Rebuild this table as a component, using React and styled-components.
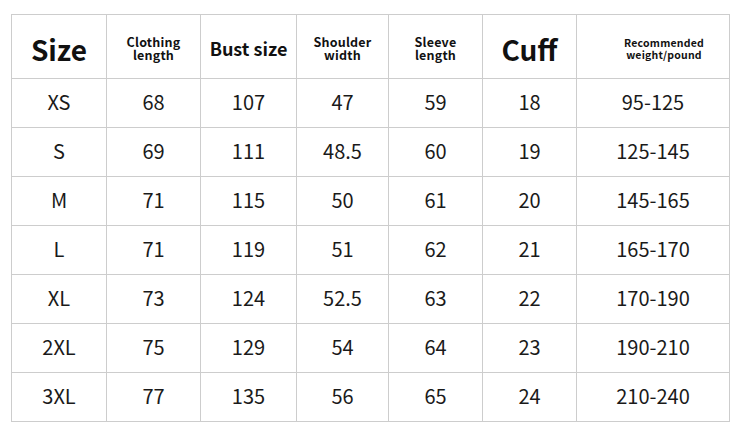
import React from "react";
import styled, { createGlobalStyle } from "styled-components";

const GlobalStyle = createGlobalStyle`
    html, body {
        margin: 0;
        padding: 0;
        background-color: #ffffff;
    }
    body {
        font-family: "Noto Sans CJK SC", "Noto Sans", sans-serif;
        color: #1a1a1a;
    }
`;

const Page = styled.div`
    width: 740px;
    height: 437px;
    padding: 14px 0 0 11px;
    box-sizing: border-box;
`;

const SizeGrid = styled.div`
    display: grid;
    grid-template-columns: 94px 93px 95px 91px 93px 93px 152px;
    grid-template-rows: 63px repeat(7, 48px);
    gap: 1px;
    padding: 1px;
    width: max-content;
    background-color: #cdcdcd;
`;

const Cell = styled.div`
    display: flex;
    align-items: center;
    justify-content: center;
    text-align: center;
    box-sizing: border-box;
    background-color: #ffffff;
`;

const HeadCell = styled(Cell)`
    flex-direction: column;
    padding-top: ${(props) => (props.$big ? "5px" : "4px")};
    padding-left: ${(props) => props.$shift || 0}px;
    font-weight: 700;
    color: #111111;
    font-size: ${(props) => props.$size}px;
    line-height: ${(props) => props.$lh || 1.1};
    letter-spacing: ${(props) => (props.$size < 14 ? "0.2px" : "0")};
`;

const HeadLine = styled.span`
    display: block;
`;

const BodyCell = styled(Cell)`
    padding-bottom: 3px;
    font-size: 20px;
    font-weight: 400;
    color: #1a1a1a;
`;

const headers = [
    { text: ["Size"], size: 28, big: true },
    { text: ["Clothing", "length"], size: 12.5, lh: 1 },
    { text: ["Bust size"], size: 18, big: true },
    { text: ["Shoulder", "width"], size: 12.5, lh: 1 },
    { text: ["Sleeve", "length"], size: 12.5, lh: 1 },
    { text: ["Cuff"], size: 28, big: true },
    { text: ["Recommended", "weight/pound"], size: 10.5, lh: 1.1, shift: 22 },
];

const rows = [
    ["XS", "68", "107", "47", "59", "18", "95-125"],
    ["S", "69", "111", "48.5", "60", "19", "125-145"],
    ["M", "71", "115", "50", "61", "20", "145-165"],
    ["L", "71", "119", "51", "62", "21", "165-170"],
    ["XL", "73", "124", "52.5", "63", "22", "170-190"],
    ["2XL", "75", "129", "54", "64", "23", "190-210"],
    ["3XL", "77", "135", "56", "65", "24", "210-240"],
];

export default function App() {
    return (
        <Page>
            <GlobalStyle />
            <SizeGrid>
                {headers.map((h, i) => (
                    <HeadCell
                        key={"h" + i}
                        $size={h.size}
                        $lh={h.lh}
                        $big={h.big}
                        $shift={h.shift}
                    >
                        {h.text.map((line) => (
                            <HeadLine key={line}>{line}</HeadLine>
                        ))}
                    </HeadCell>
                ))}
                {rows.map((row, r) =>
                    row.map((value, c) => (
                        <BodyCell key={r + "-" + c}>{value}</BodyCell>
                    ))
                )}
            </SizeGrid>
        </Page>
    );
}
